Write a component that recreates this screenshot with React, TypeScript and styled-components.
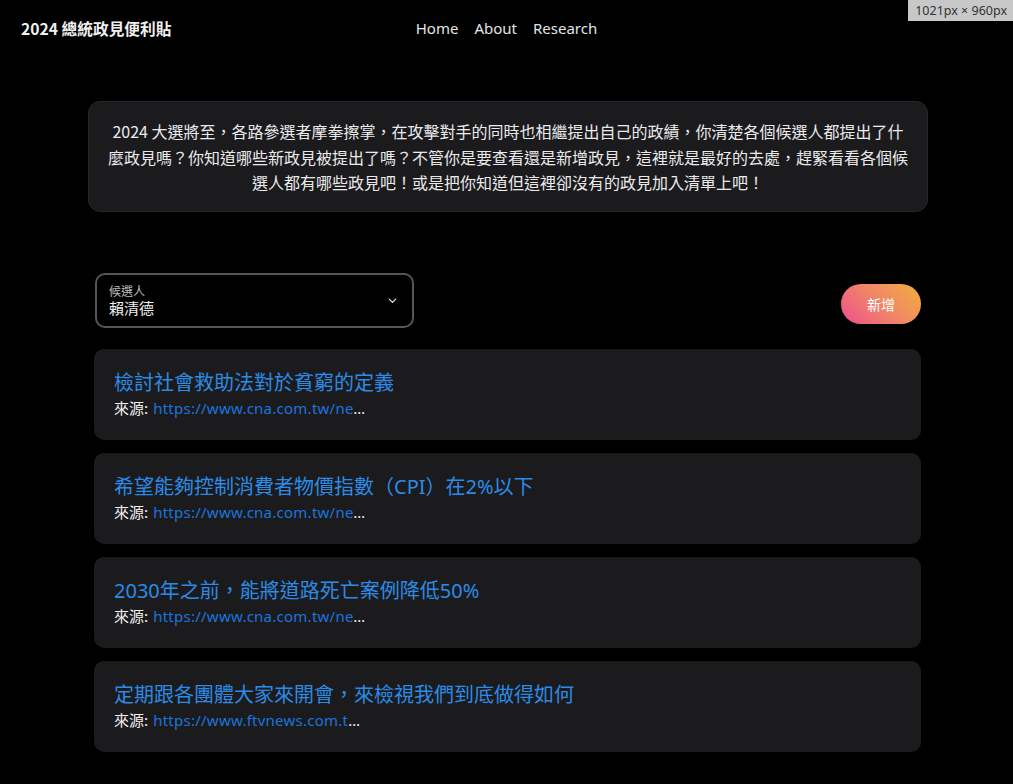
import React from "react";
import styled, { createGlobalStyle } from "styled-components";

const Global = createGlobalStyle`
  html, body { margin: 0; padding: 0; background: #000; }
  body {
    font-family: "Noto Sans", "Noto Sans CJK TC", sans-serif;
    color: #ececec;
    min-height: 784px;
  }
`;

const Page = styled.div`
  position: relative;
  width: 1013px;
  min-height: 784px;
  background: #000;
`;

const Header = styled.header`
  position: relative;
  height: 56px;
  display: flex;
  align-items: center;
  padding: 0 21px;
`;

const Brand = styled.div`
  font-family: "Noto Sans CJK TC", sans-serif;
  font-size: 15.7px;
  font-weight: 700;
  color: #f0f0f0;
`;

const Nav = styled.nav`
  position: absolute;
  left: 0;
  right: 0;
  top: 0;
  height: 56px;
  display: flex;
  justify-content: center;
  align-items: center;
  gap: 16px;
  pointer-events: none;
`;

const NavLink = styled.a`
  font-size: 15px;
  color: #e4e4e4;
  text-decoration: none;
  pointer-events: auto;
`;

const SizeBadge = styled.div`
  position: absolute;
  top: 0;
  right: 0;
  height: 21px;
  padding: 0 6px 0 7px;
  background: #c8c8c8;
  color: #333;
  font-size: 12.5px;
  line-height: 21px;
  font-family: "Noto Sans", sans-serif;
`;

const Main = styled.main`
  display: flex;
  flex-direction: column;
  padding: 45px 0 30px;
`;

const Intro = styled.section`
  width: 840px;
  margin-left: 88px;
  box-sizing: border-box;
  padding: 17px 17px 15px;
  background: #1b1b1e;
  border: 1px solid #26262a;
  border-radius: 12px;
  text-align: center;
  font-family: "Noto Sans CJK TC", sans-serif;
  font-size: 16px;
  line-height: 25.6px;
  color: #eaeaea;
`;

const Toolbar = styled.div`
  width: 827px;
  margin: 61px 0 21px 94px;
  display: flex;
  align-items: center;
  justify-content: space-between;
`;

const SelectBox = styled.div`
  width: 319px;
  height: 55px;
  margin-left: 1px;
  box-sizing: border-box;
  border: 2px solid #55555a;
  border-radius: 10px;
  padding: 6px 14px 0 12px;
  display: flex;
  align-items: center;
  justify-content: space-between;
`;

const SelectText = styled.div`
  display: flex;
  flex-direction: column;
  margin-top: -6px;
`;

const SelectLabel = styled.span`
  font-family: "Noto Sans CJK TC", sans-serif;
  font-size: 12px;
  line-height: 15px;
  color: #bdbdbd;
`;

const SelectValue = styled.span`
  font-family: "Noto Sans CJK TC", sans-serif;
  font-size: 15px;
  line-height: 20px;
  color: #f0f0f0;
`;

const Chevron = styled.svg`
  width: 11px;
  height: 11px;
  margin-top: -6px;
`;

const AddButton = styled.button`
  width: 80px;
  height: 40px;
  margin-top: 8px;
  border: none;
  border-radius: 20px;
  background: linear-gradient(45deg, #ee4f8f 0%, #f08a64 55%, #f2ad3c 100%);
  color: #fff;
  font-family: "Noto Sans CJK TC", sans-serif;
  font-size: 14px;
  cursor: pointer;
`;

const List = styled.div`
  width: 827px;
  margin-left: 94px;
  display: flex;
  flex-direction: column;
  gap: 13px;
`;

const Card = styled.article`
  height: 91px;
  box-sizing: border-box;
  padding: 20px 20px 0;
  background: #1b1b1e;
  border-radius: 10px;
`;

const Title = styled.h3`
  margin: 0;
  font-size: 20px;
  font-weight: 400;
  line-height: 28px;
  color: #2b8be6;
`;

const Source = styled.div`
  font-size: 15px;
  line-height: 22px;
  color: #f0f0f0;
  display: flex;
  align-items: baseline;
`;

const SourceLabel = styled.span`
  font-family: "Noto Sans CJK TC", sans-serif;
`;

const LinkClip = styled.span`
  display: inline-block;
  max-width: 218px;
  overflow: hidden;
  white-space: nowrap;
  text-overflow: ellipsis;
  color: #f0f0f0;
  margin-left: 5px;
  vertical-align: bottom;
`;

const SourceLink = styled.a`
  color: #1c74db;
  text-decoration: none;
  letter-spacing: 0.25px;
`;

const items = [
  { title: "檢討社會救助法對於貧窮的定義", url: "https://www.cna.com.tw/news/aipl/202309100092.aspx" },
  { title: "希望能夠控制消費者物價指數（CPI）在2%以下", url: "https://www.cna.com.tw/news/aipl/202309100092.aspx" },
  { title: "2030年之前，能將道路死亡案例降低50%", url: "https://www.cna.com.tw/news/aipl/202309100092.aspx" },
  { title: "定期跟各團體大家來開會，來檢視我們到底做得如何", url: "https://www.ftvnews.com.tw/news/detail/2023910P07M1" },
];

export default function App() {
  return (
    <Page>
      <Global />
      <Header>
        <Brand>2024 總統政見便利貼</Brand>
        <Nav>
          <NavLink href="#">Home</NavLink>
          <NavLink href="#">About</NavLink>
          <NavLink href="#">Research</NavLink>
        </Nav>
      </Header>
      <SizeBadge>1021px × 960px</SizeBadge>
      <Main>
        <Intro>
          2024 大選將至，各路參選者摩拳擦掌，在攻擊對手的同時也相繼提出自己的政績，你清楚各個候選人都提出了什麼政見嗎？你知道哪些新政見被提出了嗎？不管你是要查看還是新增政見，這裡就是最好的去處，趕緊看看各個候選人都有哪些政見吧！或是把你知道但這裡卻沒有的政見加入清單上吧！
        </Intro>
        <Toolbar>
          <SelectBox>
            <SelectText>
              <SelectLabel>候選人</SelectLabel>
              <SelectValue>賴清德</SelectValue>
            </SelectText>
            <Chevron viewBox="0 0 12 12" fill="none">
              <path d="M2.5 4.5 L6 8 L9.5 4.5" stroke="#e0e0e0" strokeWidth="1.4" strokeLinecap="round" strokeLinejoin="round" />
            </Chevron>
          </SelectBox>
          <AddButton>新增</AddButton>
        </Toolbar>
        <List>
          {items.map((it, i) => (
            <Card key={i}>
              <Title>{it.title}</Title>
              <Source>
                <SourceLabel>來源:</SourceLabel>
                <LinkClip>
                  <SourceLink href={it.url}>{it.url}</SourceLink>
                </LinkClip>
              </Source>
            </Card>
          ))}
        </List>
      </Main>
    </Page>
  );
}
